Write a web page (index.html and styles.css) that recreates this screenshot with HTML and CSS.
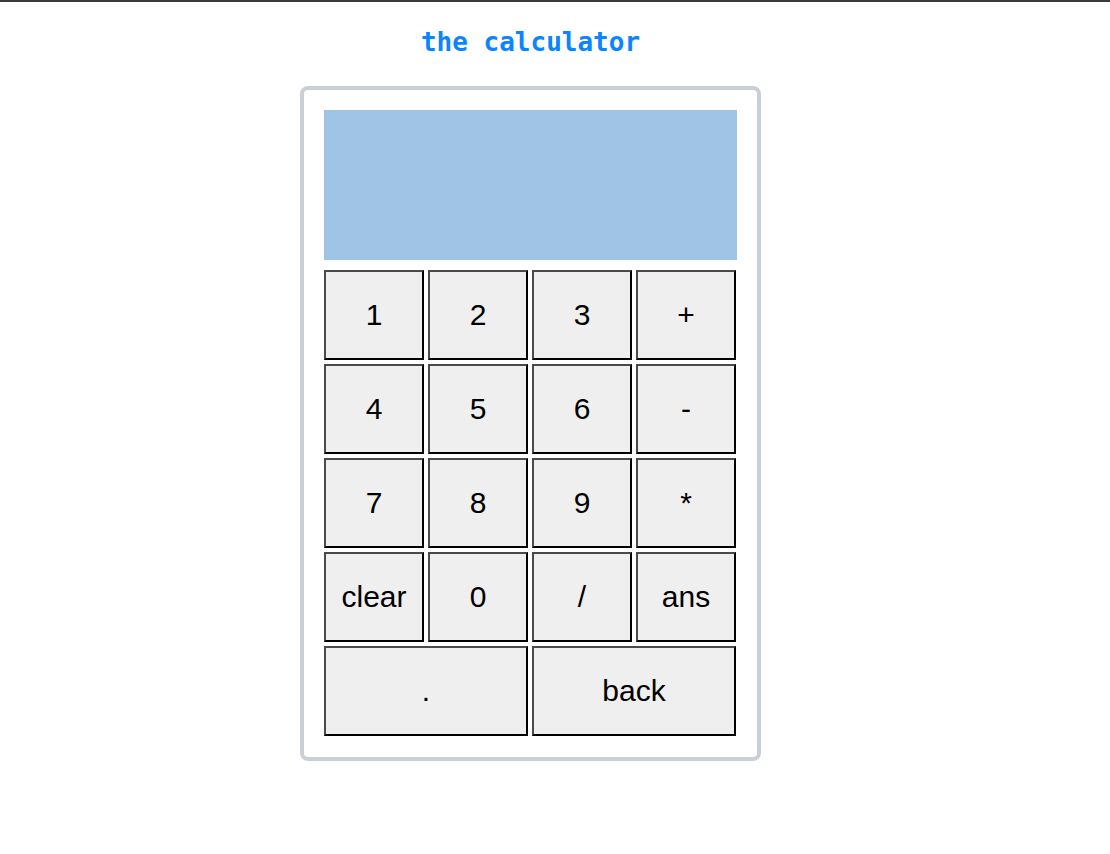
FILE: index.html
```html
<!DOCTYPE html>
<html>
<head>
<meta charset="utf-8">
<title>the calculator</title>
<link rel="stylesheet" href="styles.css">
</head>
<body>
<div class="app">
  <h1 class="title">the calculator</h1>
  <div class="calc">
    <div class="display"></div>
    <div class="keys">
      <button class="key">1</button>
      <button class="key">2</button>
      <button class="key">3</button>
      <button class="key">+</button>
      <button class="key">4</button>
      <button class="key">5</button>
      <button class="key">6</button>
      <button class="key">-</button>
      <button class="key">7</button>
      <button class="key">8</button>
      <button class="key">9</button>
      <button class="key">*</button>
      <button class="key">clear</button>
      <button class="key">0</button>
      <button class="key">/</button>
      <button class="key">ans</button>
      <button class="key wide">.</button>
      <button class="key wide">back</button>
    </div>
  </div>
</div>
</body>
</html>
```
FILE: styles.css
```css
html, body {
  margin: 0;
  padding: 0;
  background: #ffffff;
}
body {
  border-top: 2px solid #3a3a3a;
  font-family: "Liberation Sans", Arial, sans-serif;
}
.app {
  width: 461px;
  margin-left: 300px;
}
.title {
  margin: 0;
  padding-top: 25px;
  height: 84px;
  box-sizing: border-box;
  text-align: center;
  font-family: "DejaVu Sans Mono", monospace;
  font-weight: bold;
  font-size: 26px;
  line-height: 30px;
  color: #0a84ff;
}
.calc {
  box-sizing: border-box;
  width: 461px;
  height: 675px;
  border: 4px solid #c9cfd5;
  border-radius: 8px;
  padding: 20px;
}
.display {
  height: 150px;
  background: #9fc4e5;
  margin-bottom: 10px;
}
.keys {
  display: grid;
  grid-template-columns: repeat(4, 100px);
  grid-auto-rows: 90px;
  gap: 4px;
}
.key {
  margin: 0;
  padding: 0;
  background: #efefef;
  color: #000;
  font-family: "Liberation Sans", Arial, sans-serif;
  font-size: 30px;
  border-width: 2px;
  border-style: solid;
  border-color: #4a4a4a #000000 #000000 #4a4a4a;
}
.wide {
  grid-column: span 2;
}
```
